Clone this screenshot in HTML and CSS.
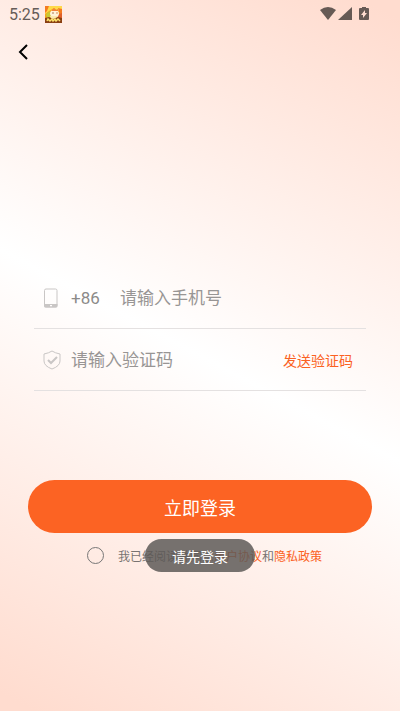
FILE: index.html
```html
<!DOCTYPE html>
<html lang="zh-CN">
<head>
<meta charset="utf-8">
<meta name="viewport" content="width=device-width, initial-scale=1">
<title>登录</title>
<link rel="stylesheet" href="styles.css">
</head>
<body>
<div class="page">
  <header class="status">
    <span class="time">5:25</span>
    <svg class="app-icon" viewBox="0 0 17 17" aria-hidden="true">
      <rect width="17" height="17" fill="#f5a51f"/>
      <path d="M0 0h17v3L13 5 9 2 4 5 0 8z" fill="#ffd94a"/>
      <path d="M0 0h4L2 5 0 7zM13 2l4 1v5l-3-2z" fill="#f47a20"/>
      <path d="M1 8l4-3 2 6-5 1z" fill="#c8c936"/>
      <path d="M12 8l5-1v5h-5z" fill="#e0602a"/>
      <ellipse cx="9.500" cy="7.500" rx="4.500" ry="3.500" fill="#fff3d8"/>
      <path d="M7 4l2-2 2 2 2-1v2H7z" fill="#f2803b"/>
      <circle cx="8" cy="7" r=".7" fill="#8c4a24"/>
      <circle cx="12" cy="7" r=".7" fill="#c3612b"/>
      <path d="M5 10h8l-1 3H6z" fill="#fbe9b0"/>
      <path d="M0 12l4-1 4 2 5-2 4 1v5H0z" fill="#8a3f12"/>
      <path d="M2 15l1-2 2 2 2-2 1 2 2-2 1 2 2-2 2 2" fill="none" stroke="#ffe56b" stroke-width="1.4"/>
    </svg>
    <svg class="signals" viewBox="0 0 50 16" aria-hidden="true">
      <path d="M0 4Q8-2 16 4L8 14z"/>
      <path d="M32 1v13H18z"/>
      <path fill-rule="evenodd" d="M42 1h4v1h2q1 0 1 1v10q0 1-1 1h-8q-1 0-1-1V3q0-1 1-1h2zM45 4l-4 5h2v3l4-5h-2z"/>
    </svg>
  </header>
  <nav class="nav">
    <button class="back" type="button" aria-label="返回">
      <svg viewBox="0 0 10 16" aria-hidden="true"><path d="M9 1L2 8l7 7"/></svg>
    </button>
  </nav>
  <form class="login">
    <div class="fields">
      <div class="field">
        <svg class="field-icon" viewBox="0 0 18 20" aria-hidden="true">
          <rect x="1.500" y="1" width="12.500" height="18" rx="1.500"/>
          <path class="solid" fill-rule="evenodd" d="M1 16h13.500v2q0 1.500-1.500 1.500H2.500q-1.500 0-1.500-1.500zM7 17v1.500h2V17z"/>
        </svg>
        <label class="prefix" for="phone">+86</label>
        <input id="phone" type="tel" placeholder="请输入手机号">
      </div>
      <div class="field">
        <svg class="field-icon" viewBox="0 0 18 20" aria-hidden="true">
          <path d="M9 1Q12 3 17 4v7q0 5-8 8-8-3-8-8V4Q6 3 9 1z"/>
          <path class="check" d="M5 10l3 3 6-6"/>
        </svg>
        <input id="code" type="text" inputmode="numeric" placeholder="请输入验证码" aria-label="验证码">
        <button class="send" type="button">发送验证码</button>
      </div>
    </div>
    <button class="submit" type="button">立即登录</button>
    <div class="terms">
      <input id="agree" type="checkbox">
      <label for="agree">我已经阅读并同意<a href="#user">用户协议</a>和<a href="#privacy">隐私政策</a></label>
      <div class="toast" role="status">请先登录</div>
    </div>
  </form>
</div>
</body>
</html>
```
FILE: styles.css
```css
* {
  box-sizing: border-box;
}

body {
  margin: 0;
  font-family: Roboto, "Noto Sans CJK SC", sans-serif;
}

button,
input {
  font-family: inherit;
  margin: 0;
  padding: 0;
  border: 0;
  background: none;
}

.page {
  min-height: 100vh;
  background: linear-gradient(208deg, #ffdccf 2%, #fff 50%, #ffdccf 98%);
}

.status {
  display: flex;
  align-items: center;
  gap: 5px;
  height: 28px;
  padding: 0 30px 0 9px;
}

.time {
  font-size: 16px;
  color: #665c58;
}

.app-icon {
  width: 17px;
  height: 17px;
}

.signals {
  width: 50px;
  height: 16px;
  margin-left: auto;
  fill: #665a55;
}

.nav {
  display: flex;
  padding: 12px 11px;
}

.back {
  display: grid;
  place-items: center;
  width: 24px;
  height: 24px;
}

.back svg {
  width: 10px;
  height: 16px;
  fill: none;
  stroke: #000;
  stroke-width: 2;
}

.login {
  padding: 191px 28px 0;
}

.fields {
  padding: 0 6px;
}

.field {
  display: flex;
  align-items: center;
  height: 62px;
  padding: 0 13px 0 9px;
  border-bottom: 1px solid #e4e1e1;
}

.field-icon {
  flex: none;
  width: 18px;
  height: 20px;
  margin-right: 10px;
  fill: none;
  stroke: #c9c6c5;
}

.field-icon .solid {
  fill: #c9c6c5;
  stroke: none;
}

.field-icon .check {
  stroke-width: 2;
}

.prefix {
  width: 49px;
  font-size: 17px;
  color: #8c8a89;
}

.field input {
  flex: 1;
  min-width: 0;
  height: 40px;
  font-size: 17px;
  color: #333;
  outline: none;
}

.field input::placeholder {
  color: #989594;
  opacity: 1;
}

.send {
  font-size: 14px;
  color: #fb6122;
}

.submit {
  display: block;
  width: 100%;
  height: 53px;
  margin-top: 89px;
  border-radius: 27px;
  background: #fc6323;
  color: #fff;
  font-size: 18px;
}

.terms {
  position: relative;
  display: flex;
  align-items: center;
  justify-content: center;
  gap: 14px;
  height: 33px;
  margin-top: 6px;
  padding-left: 9px;
  font-size: 12px;
  color: #787371;
}

.terms input {
  appearance: none;
  width: 17px;
  height: 17px;
  border: 1px solid #777;
  border-radius: 50%;
}

.terms input:checked {
  background: #fc6323;
}

.terms a {
  color: #fb6122;
  text-decoration: none;
}

.toast {
  position: absolute;
  inset: 0 auto 0 50%;
  transform: translateX(-50%);
  display: flex;
  align-items: center;
  padding: 0 27px;
  border-radius: 17px;
  background: rgba(92, 88, 86, 0.84);
  color: #fff;
  font-size: 14px;
}
```
